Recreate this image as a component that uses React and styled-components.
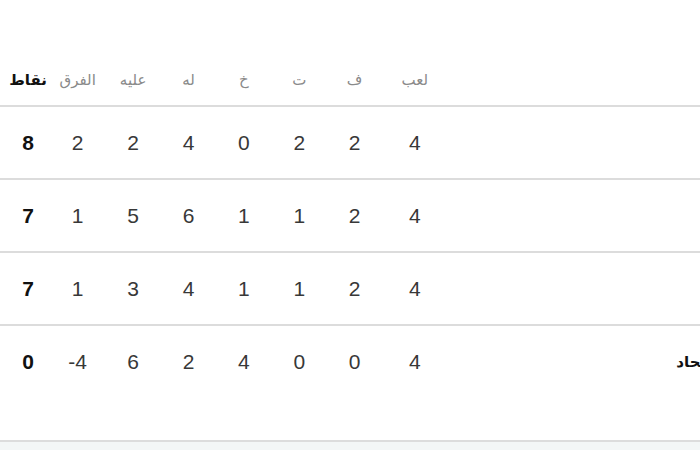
import styled, { createGlobalStyle } from "styled-components";

const GlobalStyle = createGlobalStyle`
    html, body {
        margin: 0;
        overflow: hidden;
        background: #f3f6f6;
    }
`;

const StyledTable = styled.div`
    width: 900px;
    background: #fff;
    padding: 55px 0 43px;
    border-bottom: 2px solid #dcdcdc;
    font-family: "Liberation Sans", "DejaVu Sans", Arial, sans-serif;

    .row {
        display: grid;
        grid-template-columns: 1fr 65px repeat(6, 55.4px) 50px;
        align-items: center;
        height: 71px;
        border-bottom: 2px solid #dcdcdc;
    }

    .row.head {
        height: 50px;
    }

    .row.last {
        border-bottom: none;
    }

    .cell {
        text-align: center;
        font-size: 21px;
        color: #383838;
    }

    .head .cell {
        font-size: 15px;
        color: #8a8a8a;
    }

    .pts {
        padding-left: 6px;
        font-weight: bold;
        color: #111;
    }

    .head .pts {
        color: #111;
    }

    .team {
        text-align: left;
        padding-left: 229px;
        font-size: 15px;
        font-weight: bold;
        color: #111;
        white-space: nowrap;
    }
`;

const teams = [
    { name: "", p: 4, w: 2, d: 2, l: 0, f: 4, a: 2, gd: 2, pts: 8 },
    { name: "", p: 4, w: 2, d: 1, l: 1, f: 6, a: 5, gd: 1, pts: 7 },
    { name: "", p: 4, w: 2, d: 1, l: 1, f: 4, a: 3, gd: 1, pts: 7 },
    { name: "الاتحاد", p: 4, w: 0, d: 0, l: 4, f: 2, a: 6, gd: -4, pts: 0 },
];

export default function App() {
    return (
        <>
            <GlobalStyle />
            <StyledTable dir="rtl">
                <div className="row head">
                    <div className="team"></div>
                    <div className="cell">لعب</div>
                    <div className="cell">ف</div>
                    <div className="cell">ت</div>
                    <div className="cell">خ</div>
                    <div className="cell">له</div>
                    <div className="cell">عليه</div>
                    <div className="cell">الفرق</div>
                    <div className="cell pts">نقاط</div>
                </div>
                {teams.map((t, i) => (
                    <div className={i === teams.length - 1 ? "row last" : "row"} key={i}>
                        <div className="team">{t.name}</div>
                        <div className="cell">{t.p}</div>
                        <div className="cell">{t.w}</div>
                        <div className="cell">{t.d}</div>
                        <div className="cell">{t.l}</div>
                        <div className="cell">{t.f}</div>
                        <div className="cell">{t.a}</div>
                        <div className="cell" dir="ltr">{t.gd}</div>
                        <div className="cell pts">{t.pts}</div>
                    </div>
                ))}
            </StyledTable>
        </>
    );
}
